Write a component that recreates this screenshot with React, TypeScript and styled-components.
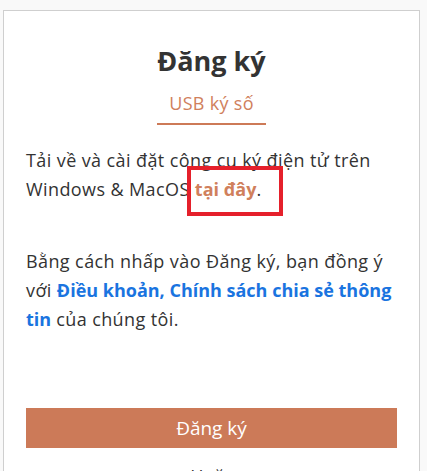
import React from "react"
import styled, { createGlobalStyle } from "styled-components"

const Global = createGlobalStyle`
  html, body {
    margin: 0;
    padding: 0;
    background: #f9f9f9;
    font-family: "Open Sans", "Noto Sans", sans-serif;
    color: #333;
  }
`

export default function App() {
  return (
    <>
      <Global />
      <S.Page>
        <S.Card>
          <S.Title>Đăng ký</S.Title>
          <S.Tabs>
            <S.Tab active>USB ký số</S.Tab>
          </S.Tabs>
          <S.Text>
            Tải về và cài đặt công cụ ký điện tử trên Windows &amp; MacOS{" "}
            <S.Marked>
              <S.Link tone="orange" href="#">
                tại đây
              </S.Link>
            </S.Marked>
            .
          </S.Text>
          <S.Text spaced>
            Bằng cách nhấp vào Đăng ký, bạn đồng ý với{" "}
            <S.Link tone="blue" href="#">
              Điều khoản, Chính sách chia sẻ thông tin
            </S.Link>{" "}
            của chúng tôi.
          </S.Text>
          <S.Submit>Đăng ký</S.Submit>
          <S.Or>Hoặc</S.Or>
        </S.Card>
      </S.Page>
    </>
  )
}

const S = {
  Page: styled.div`
    padding: 10px 7px 0 3px;
    height: 471px;
    overflow: hidden;
    box-sizing: border-box;
  `,
  Card: styled.div`
    background: #fff;
    border: 1px solid #cfcfcf;
    padding: 32px 22px 40px;
    display: flex;
    flex-direction: column;
  `,
  Title: styled.h1`
    margin: 0;
    text-align: center;
    font-size: 27px;
    font-weight: 700;
    color: #333;
    line-height: 36px;
  `,
  Tabs: styled.div`
    display: flex;
    justify-content: center;
    margin-top: 12px;
  `,
  Tab: styled.div<{ active?: boolean }>`
    padding: 0 12px 8px;
    font-size: 18px;
    line-height: 24px;
    letter-spacing: 0.3px;
    color: ${(p) => (p.active ? "#d0805c" : "#666")};
    border-bottom: 2px solid ${(p) => (p.active ? "#cd7a57" : "transparent")};
  `,
  Text: styled.p<{ spaced?: boolean }>`
    margin: ${(p) => (p.spaced ? "43px" : "21px")} 0 0;
    font-size: 18px;
    letter-spacing: 0.4px;
    line-height: 29px;
    color: #333;
  `,
  Marked: styled.span`
    position: relative;
    &::after {
      content: "";
      position: absolute;
      left: -8px;
      right: -27px;
      top: -11px;
      bottom: -15px;
      border: 4px solid #e5202b;
    }
  `,
  Link: styled.a<{ tone: "orange" | "blue" }>`
    font-weight: 700;
    letter-spacing: 0;
    text-decoration: none;
    color: ${(p) => (p.tone === "orange" ? "#d0805c" : "#1a74e0")};
  `,
  Submit: styled.button`
    margin-top: 74px;
    height: 40px;
    border: none;
    background: #cc7a58;
    color: #fff;
    font-family: inherit;
    font-size: 19px;
  `,
  Or: styled.div`
    margin-top: 16px;
    text-align: center;
    font-size: 18px;
    color: #333;
  `,
}
